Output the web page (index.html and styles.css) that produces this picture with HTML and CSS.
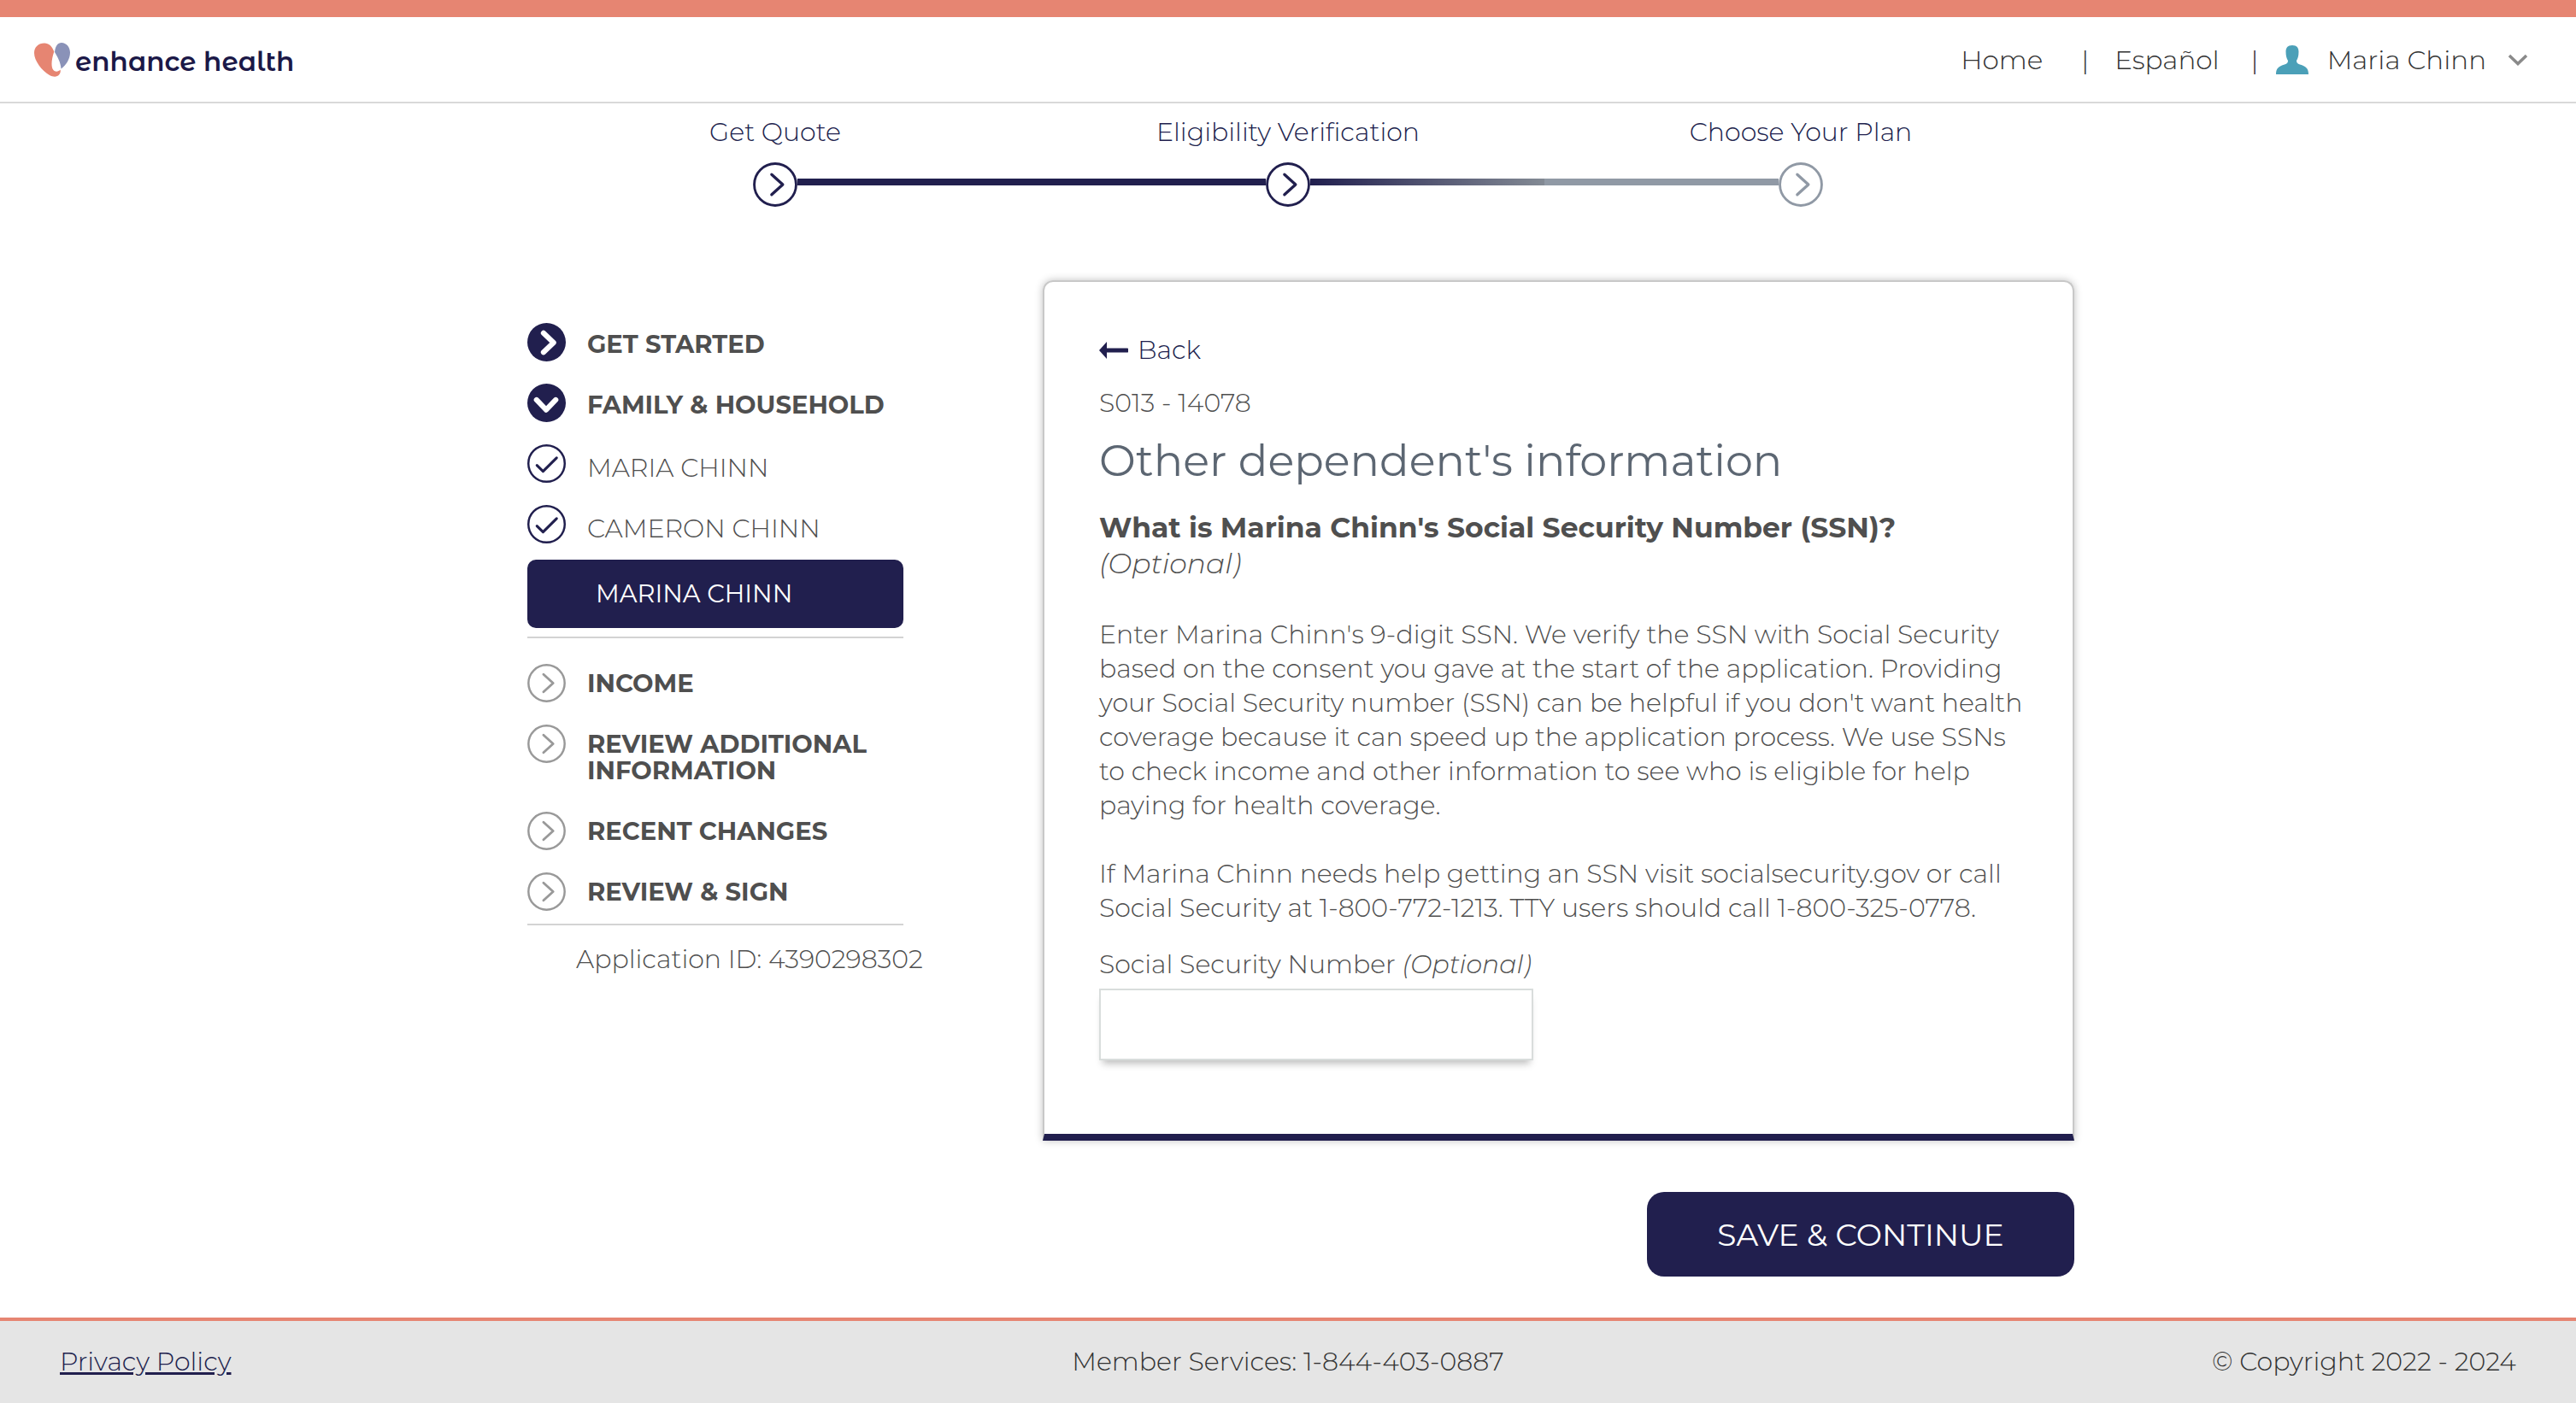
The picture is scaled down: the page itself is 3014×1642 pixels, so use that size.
FILE: index.html
```html
<!DOCTYPE html>
<html lang="en">
<head>
<meta charset="utf-8">
<meta name="viewport" content="width=device-width, initial-scale=1">
<title>Enhance Health - Other dependent's information</title>
<link rel="stylesheet" href="styles.css">
</head>
<body>
<svg class="sprite" aria-hidden="true">
  <symbol id="ring-chevron" viewBox="0 0 44 44"><circle cx="22" cy="22" r="20.700" fill="none" stroke="currentColor" stroke-width="2.400"/><path d="M18.500 12l11 10-11 10" fill="none" stroke="currentColor" stroke-width="2.800" stroke-linecap="round" stroke-linejoin="round"/></symbol>
  <symbol id="disc-chevron" viewBox="0 0 44 44"><circle cx="22" cy="22" r="22" fill="currentColor"/><path d="M18.500 11.500L30 22.500l-11.500 11" fill="none" stroke="#fff" stroke-width="6" stroke-linecap="round" stroke-linejoin="round"/></symbol>
  <symbol id="ring-check" viewBox="0 0 44 44"><circle cx="22" cy="22" r="20.800" fill="none" stroke="currentColor" stroke-width="2.400"/><path d="M11 24l7 7 15.500-15.500" fill="none" stroke="currentColor" stroke-width="3" stroke-linecap="round" stroke-linejoin="round"/></symbol>
</svg>

<header class="header">
  <a class="logo" href="#">
    <svg class="logo-mark" viewBox="0 0 42 40" aria-hidden="true"><path fill="#e68572" d="M12 .5C5 .500 0 5 0 12c0 9 9 21 18 26 4 2.200 9 2.300 11-.5 2-2.500 2-4.500 1.500-6-2 2.500-6 3-8 .5-3-3.500-2.500-12 .8-21.500C21 4 17 .500 12 .500z"/><path fill="#8a92b8" d="M32 0c5.500 0 10 5 10 11.500C42 19 37.500 26 31.500 30.500 31 23 27.500 17 24 11 25 3.500 27.500 0 32 0z"/></svg>
    <span>enhance health</span>
  </a>
  <nav class="nav" aria-label="Account">
    <a href="#">Home</a>
    <span class="divider">|</span>
    <a href="#">Español</a>
    <span class="divider divider-user">|</span>
    <button class="user" type="button">
      <svg class="user-icon" viewBox="0 0 38 34" aria-hidden="true"><path fill="#4ba0b8" d="M19 0c5.500 0 7.500 3 7.500 7.500 0 5-1 8-2.500 10.500 0 2.500 1 3.500 4 4.500C35 24.500 38 27 38 34H0c0-7 3-9.500 10-11.500 3-1 4-2 4-4.500-1.500-2.500-2.500-5.500-2.500-10.500C11.500 3 13.500 0 19 0z"/></svg>
      <span>Maria Chinn</span>
      <svg class="caret" viewBox="0 0 24 14" aria-hidden="true"><path d="M2 2l10 9.500L22 2" fill="none" stroke="#8a8a8a" stroke-width="3.500"/></svg>
    </button>
  </nav>
</header>

<main class="main">
  <ol class="steps">
    <li class="step"><span>Get Quote</span><div class="track"><i class="line"></i><svg class="step-icon" aria-hidden="true"><use href="#ring-chevron"/></svg><i class="line done"></i></div></li>
    <li class="step"><span>Eligibility Verification</span><div class="track"><i class="line done"></i><svg class="step-icon" aria-hidden="true"><use href="#ring-chevron"/></svg><i class="line fading"></i></div></li>
    <li class="step upcoming"><span>Choose Your Plan</span><div class="track"><i class="line next"></i><svg class="step-icon" aria-hidden="true"><use href="#ring-chevron"/></svg><i class="line"></i></div></li>
  </ol>

  <div class="layout">
    <aside class="sidebar">
      <ul class="menu">
        <li><a class="item" href="#"><svg class="icon" aria-hidden="true"><use href="#disc-chevron"/></svg><span>GET STARTED</span></a></li>
        <li><a class="item" href="#"><svg class="icon icon-down" aria-hidden="true"><use href="#disc-chevron"/></svg><span>FAMILY &amp; HOUSEHOLD</span></a></li>
        <li><a class="item person" href="#"><svg class="icon" aria-hidden="true"><use href="#ring-check"/></svg><span>MARIA CHINN</span></a></li>
        <li><a class="item person" href="#"><svg class="icon" aria-hidden="true"><use href="#ring-check"/></svg><span>CAMERON CHINN</span></a></li>
      </ul>
      <a class="current" href="#" aria-current="page">MARINA CHINN</a>
      <ul class="menu pending">
        <li><a class="item" href="#"><svg class="icon" aria-hidden="true"><use href="#ring-chevron"/></svg><span>INCOME</span></a></li>
        <li><a class="item tall" href="#"><svg class="icon" aria-hidden="true"><use href="#ring-chevron"/></svg><span>REVIEW ADDITIONAL<br>INFORMATION</span></a></li>
        <li><a class="item" href="#"><svg class="icon" aria-hidden="true"><use href="#ring-chevron"/></svg><span>RECENT CHANGES</span></a></li>
        <li><a class="item" href="#"><svg class="icon" aria-hidden="true"><use href="#ring-chevron"/></svg><span>REVIEW &amp; SIGN</span></a></li>
      </ul>
      <p class="app-id">Application ID: 4390298302</p>
    </aside>

    <form class="form">
      <section class="card">
        <a class="back" href="#"><svg class="back-icon" viewBox="0 0 34 20" aria-hidden="true"><path fill="#211f4e" d="M0 10L9 0v7.500h23.500a2 2 0 0 1 0 5H9V20z"/></svg>Back</a>
        <p class="code">S013 - 14078</p>
        <h1>Other dependent's information</h1>
        <h2>What is Marina Chinn's Social Security Number (SSN)?</h2>
        <p class="optional">(Optional)</p>
        <p class="help">Enter Marina Chinn's 9-digit SSN. We verify the SSN with Social Security<br>based on the consent you gave at the start of the application. Providing<br>your Social Security number (SSN) can be helpful if you don't want health<br>coverage because it can speed up the application process. We use SSNs<br>to check income and other information to see who is eligible for help<br>paying for health coverage.</p>
        <p class="help">If Marina Chinn needs help getting an SSN visit socialsecurity.gov or call<br>Social Security at 1-800-772-1213. TTY users should call 1-800-325-0778.</p>
        <label for="ssn">Social Security Number <em>(Optional)</em></label>
        <input id="ssn" type="text" inputmode="numeric">
      </section>
      <button class="save" type="submit">SAVE &amp; CONTINUE</button>
    </form>
  </div>
</main>

<footer class="footer">
  <a href="#">Privacy Policy</a>
  <span>Member Services: 1-844-403-0887</span>
  <span class="copyright">© Copyright 2022 - 2024</span>
</footer>
</body>
</html>
```
FILE: styles.css
```css
* { box-sizing: border-box; }

body {
  margin: 0;
  min-height: 100vh;
  display: flex;
  flex-direction: column;
  background: #fff;
  color: #4f4f4f;
  font: 300 30px/40px Montserrat, Inter, sans-serif;
}

a { color: inherit; text-decoration: none; }
p, h1, h2, ul, ol { margin: 0; padding: 0; }
ul, ol { list-style: none; }
button { font: inherit; color: inherit; border: 0; background: none; padding: 0; }
svg { display: block; flex: none; }
.sprite { position: absolute; width: 0; height: 0; }

.header {
  display: flex;
  align-items: center;
  justify-content: space-between;
  height: 121px;
  padding: 0 56px 0 40px;
  border-top: 20px solid #e68572;
  border-bottom: 2px solid #d9d9d9;
}
.logo {
  display: flex;
  align-items: center;
  gap: 6px;
  color: #1b1847;
  font-family: "Montserrat Alternates", Montserrat, Inter, sans-serif;
  font-size: 31px;
  font-weight: 600;
}
.logo-mark { width: 42px; height: 40px; }
.logo span { padding-top: 4px; }

.nav { display: flex; align-items: center; color: #333; font-size: 31px; }
.divider { margin: 0 30px 0 45px; }
.divider-user { margin: 0 20px 0 37px; }
.user { display: flex; align-items: center; gap: 22px; }
.user-icon { width: 38px; height: 34px; }
.caret { width: 24px; height: 14px; margin-left: 3px; }

.main { flex: 1; padding: 14px 20px 48px; }

.steps {
  display: grid;
  grid-template-columns: repeat(3, 1fr);
  max-width: 1800px;
  margin: 0 auto 86px;
  color: #211f4e;
  text-align: center;
}
.track { display: flex; align-items: center; margin-top: 15px; }
.line { flex: 1; height: 8px; margin-bottom: 6px; }
.done { background: #211f4e; }
.fading { background: linear-gradient(90deg, #211f4e, #838a94); }
.next { background: #9099a5; }
.step-icon { width: 52px; height: 52px; }
.upcoming .step-icon { color: #9099a5; }

.layout {
  display: grid;
  grid-template-columns: 440px 1fr;
  column-gap: 163px;
  max-width: 1840px;
  margin: 0 auto;
  padding-left: 30px;
}

.sidebar { padding-top: 50px; line-height: 31px; }
.menu { display: grid; gap: 26px; }
.item { display: flex; gap: 25px; font-size: 29px; font-weight: 700; }
.item span { padding-top: 9px; }
.icon { width: 45px; height: 45px; color: #211f4e; }
.icon-down { transform: rotate(90deg); }
.person { font-size: 30px; font-weight: 300; }
.person span { padding-top: 12px; }
.current {
  display: block;
  margin-top: 19px;
  padding: 24px 80px 25px;
  border-radius: 10px;
  background: #211f4e;
  color: #fff;
  font-weight: 400;
  font-size: 29px;
}
.pending {
  margin-top: 10px;
  padding: 30px 0 15px;
  border: solid #d3d3d3;
  border-width: 2px 0;
}
.pending span { padding-top: 7px; }
.pending .icon { color: #999; }
.tall { padding-bottom: 7px; }
.app-id { padding: 24px 0 0 57px; white-space: nowrap; }

.form { display: flex; flex-direction: column; align-items: flex-end; gap: 60px; }
.card {
  display: flex;
  flex-direction: column;
  align-items: flex-start;
  width: 100%;
  padding: 60px 40px 86px 64px;
  border: 2px solid #c8c8c8;
  border-bottom: 8px solid #211f4e;
  border-radius: 12px 12px 0 0;
  box-shadow: 0 0 10px rgba(0, 0, 0, 0.25);
}
.back { display: flex; align-items: center; gap: 11px; color: #211f4e; }
.back-icon { width: 34px; height: 20px; }
.code { margin-top: 22px; }
h1 { margin-top: 17px; color: #5c6672; font-size: 51px; font-weight: 400; line-height: 60px; }
h2 { margin-top: 27px; font-size: 33px; font-weight: 700; line-height: 42px; }
.optional { margin-bottom: 3px; font-size: 33px; font-style: italic; line-height: 42px; }
.help { margin-top: 40px; }
label { margin: 26px 0 8px; }
input {
  width: 508px;
  max-width: 100%;
  height: 84px;
  padding: 0 20px;
  border: 2px solid #d9dddc;
  background: #fff;
  color: inherit;
  font: inherit;
  box-shadow: 0 8px 8px -4px rgba(0, 0, 0, 0.25);
}
.save {
  width: 500px;
  height: 99px;
  border-radius: 20px;
  background: #211f4e;
  color: #fff;
  font-size: 36px;
  font-weight: 400;
}

.footer {
  display: grid;
  grid-template-columns: 1fr auto 1fr;
  align-items: center;
  height: 100px;
  padding: 0 70px;
  border-top: 4px solid #e68572;
  background: #e5e5e5;
  color: #333;
}
.footer a { justify-self: start; color: #211f4e; text-decoration: underline; }
.copyright { justify-self: end; }
```
